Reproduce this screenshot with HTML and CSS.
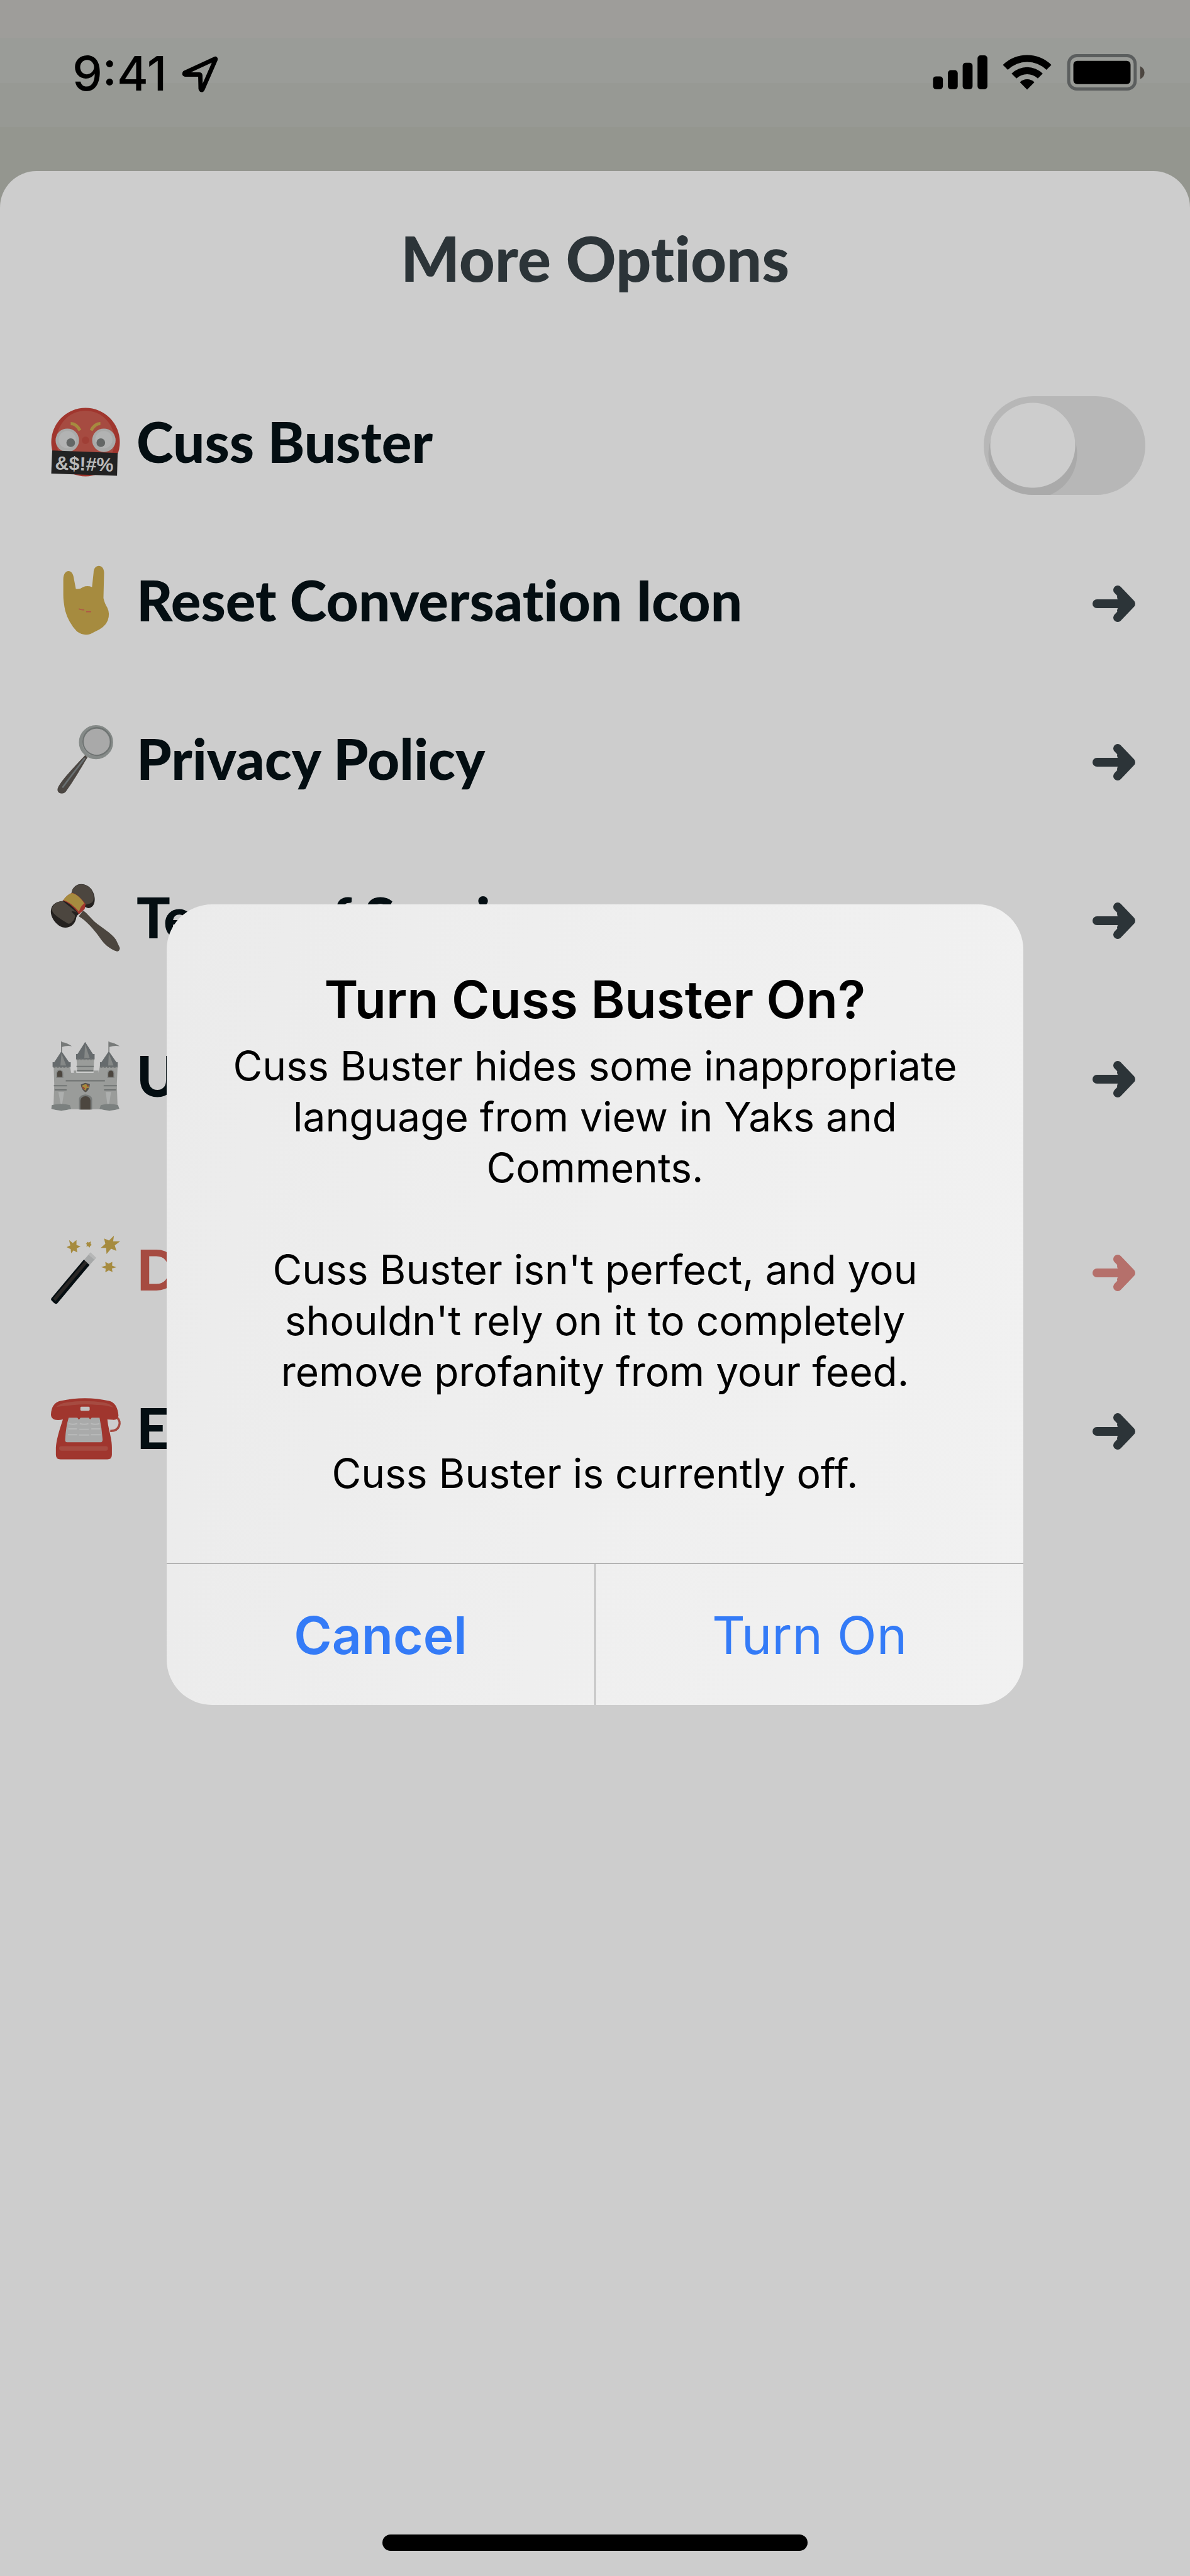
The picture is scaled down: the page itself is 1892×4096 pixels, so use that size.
FILE: index.html
```html
<!DOCTYPE html>
<html lang="en">
<head>
<meta charset="utf-8">
<meta name="viewport" content="width=device-width, initial-scale=1">
<title>More Options</title>
<link rel="stylesheet" href="styles.css">
</head>
<body>
<svg class="defs" width="0" height="0" aria-hidden="true">
  <symbol id="arrow" viewBox="0 0 68 58">
    <path d="M7 29H60M40 7L61 29L40 51M46 18L57 29L46 40" fill="none" stroke="currentColor" stroke-width="14" stroke-linecap="round" stroke-linejoin="round"/>
  </symbol>
</svg>

<header class="status">
  <div class="status-left">
    <span class="time">9:41</span>
    <svg class="location" viewBox="294 86 62 63" aria-hidden="true"><path d="M350 93.500L301 116Q299 119 302 119H324Q326 119 326 121L326.500 142Q328 146 330 142L350.500 95Q351 93 350 93.500Z" fill="none" stroke="#000" stroke-width="7" stroke-linejoin="round"/></svg>
  </div>
  <svg class="indicators" viewBox="1505 88 342 59" aria-hidden="true">
    <rect x="1505" y="124" width="16" height="21" rx="5"/>
    <rect x="1529" y="114" width="16" height="31" rx="5"/>
    <rect x="1553" y="102" width="16" height="43" rx="5"/>
    <rect x="1577" y="90" width="16" height="55" rx="5"/>
    <path d="M1618 105.500A56 56 0 0 1 1696.500 105.500L1688.500 113.500A44.500 44.500 0 0 0 1626 113.500Z"/>
    <path d="M1632 119.500A36 36 0 0 1 1682.500 119.500L1674.500 127.500A25 25 0 0 0 1640 127.500Z"/>
    <path d="M1645.500 133.500A17 17 0 0 1 1669 133.500L1657.200 145.500Z"/>
    <rect x="1724.500" y="90.500" width="107.500" height="54" rx="13" fill="none" stroke="#5b5e5e" stroke-width="5"/>
    <rect x="1732" y="99" width="92.500" height="37.500" rx="6"/>
    <path d="M1840 107.500Q1847 111 1847 118T1840 128.500Z" fill="#4c4640"/>
  </svg>
</header>

<main class="sheet">
  <h1 class="title">More Options</h1>
  <ul class="options">
    <li class="row">
      <svg class="icon" viewBox="82 657 112 112" aria-hidden="true">
        <circle cx="138" cy="713" r="55.500" fill="#a0362e"/>
        <ellipse cx="138" cy="711" rx="47" ry="49" fill="#a64b41"/>
        <path d="M86 730A55.500 55.500 0 0 0 190 730Z" fill="#a0362e"/>
        <circle cx="138" cy="710" r="6" fill="#a03f36"/>
        <circle cx="108.500" cy="710" r="19" fill="#a9aaa9"/><circle cx="167.700" cy="710" r="19" fill="#a9aaa9"/>
        <circle cx="108.500" cy="709" r="14" fill="#b2b3b3"/><circle cx="167.700" cy="709" r="14" fill="#b2b3b3"/>
        <circle cx="114" cy="714" r="7" fill="#646766"/><circle cx="162.700" cy="714" r="7" fill="#646766"/>
        <path d="M114 683Q123 683 129 694M162 683Q153 683 147 694" fill="none" stroke="#a68b3f" stroke-width="5"/>
        <path d="M84 726.500L190 730.500L189 767.500L82.500 764Z" fill="#222"/>
        <text class="censor" x="136" y="759" transform="rotate(2 136 748)">&amp;$!#%</text>
      </svg>
      <label class="label" for="cuss">Cuss Buster</label>
      <input class="switch" id="cuss" type="checkbox" role="switch">
    </li>
    <li><a class="row" href="#reset">
      <svg class="icon" viewBox="82 913 112 112" aria-hidden="true">
        <path d="M102 935C102 918 116 917 118.500 930L122.300 950Q129 951 134 947Q141 944 148.500 947L151 924C151 909 168 909 168 924L167 965Q169 974 173 980Q178 990 174 1001Q170 1012 152 1020Q138 1029 124 1019Q110 1004 105 985Q102 970 102 960Z" fill="#a68b3f"/>
        <path d="M127 982Q130 984 136 984M139 987H147" fill="none" stroke="#b05348" stroke-width="1.500"/>
      </svg>
      <span class="label">Reset Conversation Icon</span>
      <svg class="arrow" aria-hidden="true"><use href="#arrow"/></svg>
    </a></li>
    <li><a class="row" href="#privacy">
      <svg class="icon" viewBox="66 87 336 336" aria-hidden="true">
        <path d="M232 236L244 246C216 292 170 372 139 412C124 431 91 421 99 396C115 358 190 282 232 236Z" fill="#4c4743"/>
        <path d="M229 252C196 296 152 352 124 391" fill="none" stroke="#697072" stroke-width="8" stroke-linecap="round"/>
        <circle cx="285" cy="173" r="75" fill="#a9a9a9" stroke="#858a88" stroke-width="16"/>
        <circle cx="289" cy="170" r="67" fill="none" stroke="#6f7473" stroke-width="7"/>
        <circle cx="287" cy="172" r="61" fill="#a9a9a9"/>
      </svg>
      <span class="label">Privacy Policy</span>
      <svg class="arrow" aria-hidden="true"><use href="#arrow"/></svg>
    </a></li>
    <li><a class="row" href="#terms">
      <svg class="icon" viewBox="66 854 336 336" aria-hidden="true">
        <path d="M222 988C238 998 260 1025 278 1042C310 1070 360 1097 382 1130L401 1170Q398 1188 386 1186C350 1175 320 1147 300 1115C275 1080 235 1035 201 1016Z" fill="#4c463f"/>
        <path d="M166 902C174 852 232 846 262 884C284 914 286 962 258 974Q244 980 234 970L200 1006Q190 1012 188 1028C178 1070 134 1082 104 1060C76 1040 60 1005 67 980C74 952 100 944 122 942Z" fill="#24211f"/>
        <path d="M168 892C184 851 238 852 262 886C276 908 280 944 260 952C244 958 236 960 230 960L166 902ZM122 942C96 944 73 958 70 985C80 1010 104 1022 140 1046C156 1062 177 1040 183 1018C184 1004 174 1006 166 992Q184 990 200 1004L122 940Z" fill="#4c463f"/>
        <path d="M168 902C188 904 214 928 234 956L230 980L202 1006C190 984 152 946 124 940Q142 912 168 902Z" fill="#a0362e"/>
        <path d="M168 903C188 906 212 928 228 953Q210 966 202 993C184 970 150 942 126 937Q142 912 168 903Z" fill="#a68b3f"/>
      </svg>
      <span class="label">Terms of Service</span>
      <svg class="arrow" aria-hidden="true"><use href="#arrow"/></svg>
    </a></li>
    <li><a class="row" href="#usage">
      <svg class="icon" viewBox="64 123 336 336" aria-hidden="true">
        <path d="M77 240H156L162 275L175 276V264H187V276H271V264H295V276L302 240H388L384 330L388 452H76L80 330Z" fill="#9a9c9a"/>
        <path d="M188 204H274L270 270H192Z" fill="#9a9c9a"/>
        <path d="M115 170L152 224H160V247H72V224H80ZM345 170L382 224H388V247H302V224H309ZM230 125L268 184H276V210H186V184H193Z" fill="#666b6d"/>
        <path d="M115 180L138 240H110ZM345 180L368 240H342ZM230 136L252 203H226Z" fill="#858887"/>
        <path d="M113 123H118V172H113ZM343 123H348V172H343ZM118 126Q140 128 166 146Q138 142 118 150ZM348 126Q370 128 398 146Q370 142 348 150Z" fill="#777a79"/>
        <path d="M188 244H272M190 264H270M136 314H326M78 338H142M82 358H140M320 338H384M322 358H380" stroke="#6d7170" stroke-width="6"/>
        <path d="M76 248H156M304 248H386M190 210H272" stroke="#777a79" stroke-width="6" stroke-dasharray="10 6"/>
        <path d="M92 298V276Q94 262 108 262Q122 264 122 280V298ZM340 298V280Q340 264 354 262Q368 262 370 276V298Z" fill="#4c463f" stroke="#858887" stroke-width="5"/>
        <path d="M100 368H128L118 430H112ZM330 368H356L346 430H338Z" fill="#adafae"/>
        <path d="M68 432Q112 420 156 432L162 450Q114 468 66 450ZM306 432Q348 420 390 432L396 450Q348 468 300 450Z" fill="#7b807f"/>
        <path d="M200 454V402Q204 382 231 380Q260 382 264 402V454Z" fill="#777a79"/>
        <path d="M207 454V410Q210 390 232 389Q254 390 256 410V454Z" fill="#4c463f"/>
        <path d="M209 332L230 324L253 330Q252 358 232 370Q212 358 209 332Z" fill="#55504b"/>
        <path d="M216 336L232 330L246 336L248 350L238 348L232 362L218 350Z" fill="#a68b3f"/>
        <path d="M218 346L228 352M240 334L244 342" stroke="#a0362e" stroke-width="5"/>
      </svg>
      <span class="label">Usage Guidelines</span>
      <svg class="arrow" aria-hidden="true"><use href="#arrow"/></svg>
    </a></li>
    <li class="group"><a class="row danger" href="#delete">
      <svg class="icon" viewBox="66 98 336 336" aria-hidden="true">
        <path d="M226 216L254 242L96 430Q88 434 80 426L68 414Q64 408 70 402Z" fill="#050e12"/>
        <path d="M232 222L244 232L88 418L76 406Z" fill="#282625"/>
        <path d="M258 182L285 208L254 243L227 217Z" fill="#a6a8a8"/><path d="M258 182L285 208L277 217L248 193Z" fill="#b6b7b7"/>
        <path d="M154 122L172 136L190 122L190 146L210 152L191 162L194 182L176 172L164 186L162 166L142 156L160 148Z" fill="#a68b3f"/>
        <path d="M240 130L250 134L260 128L259 140L264 146L257 150L254 158L246 151L238 154L241 144L235 139L242 137Z" fill="#a68b3f"/>
        <path d="M372 100L368 128L402 128L376 148L384 174L358 164L336 190L334 160L308 160L330 140L324 114L348 124Z" fill="#a68b3f"/>
        <path d="M330 228L346 236L364 228L363 246L384 254L362 260L365 277L347 269L330 278L332 261L310 253L332 246Z" fill="#a68b3f"/>
      </svg>
      <span class="label">Delete Account</span>
      <svg class="arrow" aria-hidden="true"><use href="#arrow"/></svg>
    </a></li>
    <li><a class="row" href="#email">
      <svg class="icon" viewBox="66 867 336 336" aria-hidden="true">
        <path d="M388 984C410 1004 400 1050 354 1048" fill="none" stroke="#a64b41" stroke-width="11"/>
        <path d="M66 968C68 930 84 908 112 902Q232 876 348 902C376 908 392 936 394 974Q392 996 366 994L340 992C344 1040 362 1080 362 1130V1164Q362 1186 340 1186H112Q90 1186 90 1164V1130C92 1090 108 1040 124 992C92 1000 66 994 66 968Z" fill="#a0362e"/>
        <path d="M92 932Q110 914 142 910Q232 896 320 910Q350 914 370 934Q320 920 290 922Q232 916 180 922Q130 926 92 932Z" fill="#a64b41"/>
        <rect x="209" y="930" width="45" height="20" rx="5" fill="#c2c2c2"/>
        <path d="M152 984H194L202 994L210 984H250L256 992L264 984H302Q314 1040 317 1092Q316 1103 306 1103H144Q134 1102 135 1092Q138 1030 152 984Z" fill="#a9aaaa"/>
        <path d="M152 1012Q170 1020 194 1012M206 1012Q228 1020 248 1012M260 1012Q282 1020 302 1012M150 1038H192M204 1040H250M262 1038H306M148 1066H194M202 1068H252M260 1066H308" fill="none" stroke="#b9baba" stroke-width="6"/>
        <rect x="106" y="1122" width="237" height="22" rx="11" fill="#a64b41"/>
      </svg>
      <span class="label">Email Us</span>
      <svg class="arrow" aria-hidden="true"><use href="#arrow"/></svg>
    </a></li>
  </ul>
  <div class="home-indicator"></div>
</main>

<div class="overlay">
  <section class="alert" role="alertdialog" aria-modal="true" aria-labelledby="alert-title" aria-describedby="alert-text">
    <div class="alert-body">
      <h2 class="alert-title" id="alert-title">Turn Cuss Buster On?</h2>
      <div class="alert-text" id="alert-text">
        <p>Cuss Buster hides some inappropriate<br>language from view in Yaks and<br>Comments.</p>
        <p>Cuss Buster isn't perfect, and you<br>shouldn't rely on it to completely<br>remove profanity from your feed.</p>
        <p>Cuss Buster is currently off.</p>
      </div>
    </div>
    <div class="actions">
      <button class="action cancel" type="button">Cancel</button>
      <button class="action" type="button">Turn On</button>
    </div>
  </section>
</div>
</body>
</html>
```
FILE: styles.css
```css
* { box-sizing: border-box; }

body {
  margin: 0;
  min-height: 100vh;
  position: relative;
  display: flex;
  flex-direction: column;
  background: #94968f;
  font-family: Inter, "Liberation Sans", sans-serif;
  color: #000;
}

h1, h2, p, ul { margin: 0; padding: 0; }
ul { list-style: none; }
.defs { position: absolute; }

.status {
  height: 272px;
  flex: none;
  display: flex;
  justify-content: space-between;
  align-items: flex-start;
  padding: 86px 72px 0 115px;
  background: linear-gradient(#9e9d9a 0 60px, #9a9c98 60px 132px, #979994 132px 202px, #94968f 202px);
}
.status-left { display: flex; gap: 22px; }
.time { font-size: 76px; font-weight: 500; line-height: 60px; }
.location { width: 61px; height: 62px; }
.indicators { width: 337px; height: 58px; }

.sheet {
  flex: 1;
  display: flex;
  flex-direction: column;
  background: #cdcdcd;
  border-radius: 58px 58px 0 0;
  padding-bottom: 40px;
  font-family: Lato, "Open Sans", sans-serif;
  font-variant-ligatures: none;
}
.title {
  padding: 82px 0 116px;
  font-size: 99px;
  font-weight: 900;
  line-height: 112px;
  text-align: center;
  color: #2c3438;
}
.row {
  height: 252px;
  display: flex;
  align-items: center;
  padding: 0 71px 0 81px;
  color: #040e12;
  text-decoration: none;
}
.group { margin-top: 56px; }
.danger { color: #a64b41; }
.icon {
  width: 110px;
  height: 110px;
  flex: none;
  margin: 0 26px 10px 0;
  overflow: visible;
}
.censor {
  font: bold 31px "Liberation Sans", sans-serif;
  text-anchor: middle;
  fill: #b9b9b9;
}
.label {
  flex: 1;
  padding-bottom: 12px;
  font-size: 89px;
  font-weight: 900;
  line-height: 100px;
  white-space: nowrap;
}
.arrow {
  width: 68px;
  height: 58px;
  flex: none;
  margin-right: 16px;
  color: #2c3438;
}
.danger .arrow { color: #b5706b; }
.switch {
  appearance: none;
  width: 257px;
  height: 157px;
  flex: none;
  margin: 0;
  border-radius: 79px;
  background:
    radial-gradient(circle at 78px 78px, #cdcdcd 67px, transparent 68px),
    radial-gradient(circle at 78px 92px, #aaa 70px, transparent 71px),
    #b7b7b7;
}
.home-indicator {
  width: 676px;
  height: 26px;
  margin: auto auto 0;
  border-radius: 13px;
  background: #000;
}

.overlay {
  position: absolute;
  inset: 0;
  display: flex;
  justify-content: center;
  align-items: center;
  padding-top: 52px;
}
.alert {
  width: 72%;
  overflow: hidden;
  border-radius: 72px;
  background: linear-gradient(100deg, #ebebeb, #efefef 50%, #f1f1f1);
  text-align: center;
}
.alert-body { padding: 100px 0 102px; }
.alert-title {
  font-size: 82px;
  font-weight: 600;
  line-height: 104px;
}
.alert-text {
  display: grid;
  gap: 81px;
  padding-top: 12px;
  font-size: 64px;
  line-height: 81px;
}
.actions {
  display: flex;
  border-top: 2px solid #b4b4b4;
}
.action {
  flex: 1;
  height: 224px;
  padding: 4px 0 0;
  border: 0;
  background: none;
  font: 400 82px Inter, "Liberation Sans", sans-serif;
  color: #347bf7;
}
.cancel { border-right: 2px solid #bcbcbc; font-weight: 600; }
```
